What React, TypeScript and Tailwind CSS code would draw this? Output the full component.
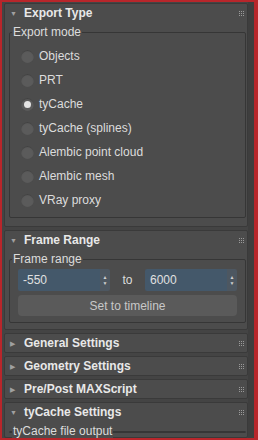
import React from 'react';

const font = { fontFamily: '"Liberation Sans", Arial, sans-serif' };

function Grip() {
  return (
    <div className="grid grid-cols-3 gap-[1px]">
      {Array.from({ length: 9 }).map((_, i) => (
        <span key={i} className="h-[1px] w-[1px] bg-[#9a9a9a]" />
      ))}
    </div>
  );
}

function Header({ title, open }: { title: string; open: boolean }) {
  return (
    <div className="flex h-[18px] items-center pl-[5px] pr-[3px]">
      <span className="w-[9px] text-[7px] leading-[7px] text-[#a0a0a0]">{open ? '▼' : '▶'}</span>
      <span className="ml-[5px] flex-1 text-[12px] font-bold text-[#e8e8e8]">{title}</span>
      <Grip />
    </div>
  );
}

function GroupBox({ label, children }: { label: string; children?: React.ReactNode }) {
  return (
    <div className="relative ml-[4px] mr-[1px] mt-[10px] rounded-[2px] border border-[#363636]">
      <span className="absolute left-[2px] top-[-9px] bg-[#4c4c4c] px-[1px] text-[12px] leading-[16px] text-[#dcdcdc]">
        {label}
      </span>
      {children}
    </div>
  );
}

function Radio({ label, checked }: { label: string; checked?: boolean }) {
  return (
    <div className="flex h-[24px] items-center pl-[11px]">
      <span className="flex h-[13px] w-[13px] items-center justify-center rounded-full bg-[#5b5b5b] shadow-[inset_0_1px_1px_#404040]">
        {checked && <span className="h-[7px] w-[7px] rounded-full bg-[#e4e4e4]" />}
      </span>
      <span className="ml-[5px] text-[12px] text-[#dcdcdc]">{label}</span>
    </div>
  );
}

function Spinner({ value }: { value: string }) {
  return (
    <div className="flex h-[22px] w-[92px] items-stretch overflow-hidden rounded-[2px]">
      <span className="flex flex-1 items-center bg-[#44586a] pl-[5px] text-[12px] text-[#e0e0e0]">{value}</span>
      <span className="flex w-[10px] flex-col items-center justify-center bg-[#4d5761] text-[5px] leading-[6px] text-[#d0d0d0]">
        <span>▲</span>
        <span>▼</span>
      </span>
    </div>
  );
}

export default function App() {
  const modes = ['Objects', 'PRT', 'tyCache', 'tyCache (splines)', 'Alembic point cloud', 'Alembic mesh', 'VRay proxy'];
  return (
    <div className="h-[440px] w-[258px] overflow-hidden border-2 border-r-[4px] border-[#b8262b] bg-[#444444]" style={font}>
      <div className="flex h-full">
        <div className="flex flex-1 flex-col pl-[2px] pt-[1px]">
          <div className="rounded-[2px] border border-[#3a3a3a] bg-[#4c4c4c] pb-[8px]">
            <Header title="Export Type" open />
            <GroupBox label="Export mode">
              <div className="pb-[5px] pt-[11px]">
                {modes.map((m) => (
                  <Radio key={m} label={m} checked={m === 'tyCache'} />
                ))}
              </div>
            </GroupBox>
          </div>

          <div className="mt-[3px] rounded-[2px] border border-[#3a3a3a] bg-[#4c4c4c] pb-[6px]">
            <Header title="Frame Range" open />
            <GroupBox label="Frame range">
              <div className="flex flex-col gap-[4px] pb-[6px] pl-[8px] pr-[8px] pt-[9px]">
                <div className="flex items-center">
                  <Spinner value="-550" />
                  <span className="flex-1 text-center text-[12px] text-[#dcdcdc]">to</span>
                  <Spinner value="6000" />
                </div>
                <div className="flex h-[21px] items-center justify-center rounded-[4px] bg-[#5a5a5a] text-[12px] text-[#c8c8c8]">
                  Set to timeline
                </div>
              </div>
            </GroupBox>
          </div>

          {['General Settings', 'Geometry Settings', 'Pre/Post MAXScript'].map((t) => (
            <div key={t} className="mt-[3px] rounded-[2px] border border-[#3a3a3a] bg-[#4c4c4c]">
              <Header title={t} open={false} />
            </div>
          ))}

          <div className="mt-[3px] flex-1 rounded-[2px] border border-[#3a3a3a] bg-[#4c4c4c]">
            <Header title="tyCache Settings" open />
            <GroupBox label="tyCache file output" />
          </div>
        </div>
        <div className="w-[6px] bg-[#3e3e3e]" />
      </div>
    </div>
  );
}
